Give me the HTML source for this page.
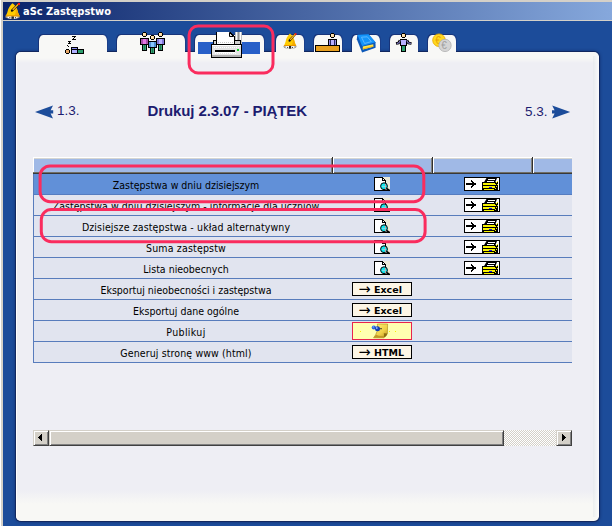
<!DOCTYPE html>
<html lang="pl">
<head>
<meta charset="utf-8">
<title>aSc Zastępstwo</title>
<style>
html,body{margin:0;padding:0;}
body{width:612px;height:526px;overflow:hidden;position:relative;background:#1c4c9a;font-family:"DejaVu Sans Condensed","Liberation Sans",sans-serif;}
.abs{position:absolute;}
#topstrip{left:0;top:0;width:612px;height:2px;background:#d4d0c8;}
#leftw{left:0;top:0;width:1px;height:526px;background:#fff;}
#leftg{left:1px;top:0;width:2px;height:526px;background:#d4d0c8;}
#titlebar{left:3px;top:2px;width:609px;height:18px;background:linear-gradient(to right,#0a246a 0%,#86a8dc 100%);}
#titleline{left:3px;top:20px;width:609px;height:1px;background:#d4d0c8;}
#title{left:23px;top:5px;font-family:"DejaVu Sans Condensed","Liberation Sans",sans-serif;font-weight:bold;font-size:11px;color:#fff;line-height:14px;white-space:nowrap;letter-spacing:0px;}
.tab{position:absolute;top:35px;height:17px;background:#f8f8f6;border-radius:4px 4px 0 0 / 6px 6px 0 0;box-shadow:-1px -1px 0 #17347a, 1px -1px 0 #1a3f8a;}
#panel{left:16px;top:52px;width:583px;height:469px;border-radius:5px;background:linear-gradient(to bottom,#f8f8f6 0px,#f8f8f6 6px,#eeeef4 11px,#eeeef4 438px,#f8f8f5 452px,#f8f8f5 469px);box-shadow:inset 1px 0 0 rgba(255,255,255,0.9),0 0 0 1px #12285f,0 0 3px 1px rgba(8,20,70,0.5);}
.nav{position:absolute;font-family:"Liberation Sans",sans-serif;font-size:13.5px;color:#1c1c70;line-height:16px;white-space:nowrap;}
#heading{left:147.500px;top:102px;letter-spacing:-0.1px;font-family:"Liberation Sans",sans-serif;font-weight:bold;font-size:15px;color:#1c1c70;line-height:18px;white-space:nowrap;}
.row{position:absolute;left:34px;width:538px;height:20px;background:#e1e4ef;border-bottom:1px solid #587cbc;}
.lbl{position:absolute;left:34px;width:304px;text-align:center;font-size:10.5px;line-height:13px;color:#000;white-space:nowrap;}
.hl{position:absolute;border:2.5px solid #f0336c;border-radius:9px;box-sizing:border-box;}
.btn{position:absolute;box-sizing:border-box;border:1px solid #000;background:#fdf6e6;font-family:"DejaVu Sans","Liberation Sans",sans-serif;font-weight:bold;font-size:9.5px;line-height:12px;white-space:nowrap;color:#000;}
.btn .ar{position:absolute;left:5.500px;top:0px;font-family:"DejaVu Sans",sans-serif;font-weight:normal;font-size:14.500px;line-height:12px;}
.btn .tx{position:absolute;left:21px;top:1px;}
.sbb{box-sizing:border-box;background:#d4d0c8;border-top:1px solid #d4d0c8;border-left:1px solid #d4d0c8;border-right:1px solid #404040;border-bottom:1px solid #404040;box-shadow:inset 1px 1px 0 #fff,inset -1px -1px 0 #808080;}
</style>
</head>
<body>
<div id="topstrip" class="abs"></div>
<div id="titlebar" class="abs"></div>
<div id="titleline" class="abs"></div>
<div id="leftw" class="abs"></div>
<div id="leftg" class="abs"></div>
<div id="title" class="abs">aSc Zastępstwo</div>

<div id="panel" class="abs"></div>
<div class="abs" style="left:593px;top:56px;width:6px;height:461px;background:linear-gradient(to right,rgba(225,230,232,0.5),rgba(255,255,255,0.7))"></div>
<!-- tabs -->
<div class="tab" style="left:39px;width:68px"></div>
<div class="tab" style="left:117px;width:68px"></div>
<div class="tab" style="left:195px;width:69px"></div>
<div class="tab" style="left:276px;width:28px"></div>
<div class="tab" style="left:314px;width:28px"></div>
<div class="tab" style="left:352px;width:28px"></div>
<div class="tab" style="left:390px;width:28px"></div>
<div class="tab" style="left:428px;width:28px"></div>
<div class="abs" style="left:198px;top:42px;width:62px;height:12px;background:#2860c8"></div>


<!-- icons -->
<svg class="abs" style="left:0;top:0" width="612" height="526" viewBox="0 0 612 526" shape-rendering="crispEdges">
<!-- title bell -->
<defs><g id="bell" shape-rendering="auto">
<ellipse cx="8" cy="14.300" rx="7.400" ry="1.700" fill="#c8c8c8" stroke="#505050" stroke-width="0.500"/>
<ellipse cx="8" cy="14.700" rx="5" ry="1.400" fill="#ffffff"/>
<rect x="6.800" y="13.400" width="2.600" height="2.800" fill="#282828"/><rect x="4.600" y="14.400" width="1.200" height="1.200" fill="#404040"/><rect x="10.400" y="14.400" width="1.200" height="1.200" fill="#404040"/>
<path d="M8 0.200 C 10.500 2,12.500 4.500,13.200 7.500 C 13.600 10,14.500 11.500,15.400 13.400 L 0.600 13.400 C 2.200 11.500,2.800 9,3.400 6.700 C 4.500 3.500,6.500 1.500,8 0.200 Z" fill="#ffcc00"/>
<path d="M10.800 4.500 C 12.200 6,12.800 7.500,13.200 8.500 C 13.600 10.500,14.500 11.800,15.400 13.400 L 9.500 13.400 C 11.500 11,11.800 8,10.800 4.500 Z" fill="#f4aa00"/>
<path d="M1.400 12.500 L 14.800 12.500 L 15.400 13.400 L 0.600 13.400 Z" fill="#e89400"/>
<path d="M7.400 7.800 L14.300 0.900" stroke="#3a2a00" stroke-width="2.400"/><path d="M8.300 6.900 L14.300 0.900" stroke="#f0a000" stroke-width="1.300"/>
<path d="M7.600 7.600 L14.300 0.900" stroke="#ffe070" stroke-width="0.500"/>
<circle cx="14.600" cy="0.900" r="1.200" fill="#ff1818"/>
<circle cx="7.300" cy="7.900" r="1.100" fill="#101010"/>
</g></defs>
<use href="#bell" transform="translate(4.8,3) scale(0.97,0.98)"/>
<!-- tab1: sleeper -->
<g fill="#000">
<rect x="72" y="36" width="4" height="1"/><rect x="74" y="37" width="1" height="1"/><rect x="73" y="38" width="1" height="1"/><rect x="72" y="39" width="4" height="1"/>
<rect x="68" y="41" width="3" height="1"/><rect x="69" y="42" width="1" height="1"/><rect x="68" y="43" width="3" height="1"/>
<rect x="67" y="45" width="1" height="1"/><rect x="68" y="46" width="1" height="1"/>
<rect x="66" y="49" width="3" height="5"/><rect x="65" y="50" width="5" height="3"/>
<rect x="71" y="47" width="7" height="7"/><rect x="77" y="49" width="7" height="5"/>
</g>
<rect x="66" y="50" width="3" height="3" fill="#e8a868"/>
<rect x="72" y="48" width="5" height="1" fill="#8888f0"/><rect x="72" y="50" width="5" height="3" fill="#b0b0ff"/>
<rect x="78" y="50" width="5" height="3" fill="#2e9e6e"/>
<!-- tab2: three persons -->
<rect x="143" y="32" width="3" height="5" fill="#000"/><rect x="142" y="33" width="5" height="3" fill="#000"/><rect x="143" y="33" width="3" height="3" fill="#f8d498"/><rect x="143" y="33" width="2" height="2" fill="#fde4b8"/><rect x="140" y="38" width="9" height="7" fill="#000"/><rect x="141" y="39" width="7" height="5" fill="#a850a8"/><rect x="143" y="39" width="3" height="5" fill="#e478e4"/><rect x="142" y="44" width="5" height="7" fill="#000"/><rect x="143" y="45" width="3" height="5" fill="#38a878"/><rect x="144" y="45" width="1" height="5" fill="#1e7850"/>
<rect x="159" y="32" width="3" height="5" fill="#000"/><rect x="158" y="33" width="5" height="3" fill="#000"/><rect x="159" y="33" width="3" height="3" fill="#f8d498"/><rect x="159" y="33" width="2" height="2" fill="#fde4b8"/><rect x="156" y="38" width="9" height="7" fill="#000"/><rect x="157" y="39" width="7" height="5" fill="#8078d8"/><rect x="159" y="39" width="3" height="5" fill="#b8b0ff"/><rect x="158" y="44" width="5" height="7" fill="#000"/><rect x="159" y="45" width="3" height="5" fill="#38a878"/><rect x="160" y="45" width="1" height="5" fill="#1e7850"/>
<rect x="151" y="35" width="3" height="5" fill="#000"/><rect x="150" y="36" width="5" height="3" fill="#000"/><rect x="151" y="36" width="3" height="3" fill="#f8d498"/><rect x="151" y="36" width="2" height="2" fill="#fde4b8"/><rect x="148" y="41" width="9" height="7" fill="#000"/><rect x="149" y="42" width="7" height="5" fill="#5090d0"/><rect x="151" y="42" width="3" height="5" fill="#88c8ff"/><rect x="150" y="47" width="5" height="7" fill="#000"/><rect x="151" y="48" width="3" height="5" fill="#38a878"/><rect x="152" y="48" width="1" height="5" fill="#1e7850"/>
<!-- tab3: printer -->
<g>
<rect x="235" y="32" width="7" height="13" fill="#c0c0c0"/><rect x="236" y="32" width="1" height="12" fill="#fff"/><rect x="240" y="32" width="1" height="12" fill="#fff"/><rect x="238" y="32" width="1" height="10" fill="#909090"/>
<rect x="213" y="40" width="28" height="5" fill="#000"/><rect x="214" y="41" width="26" height="4" fill="#d0d0d0"/>
<path d="M216 32 L230 32 L235 37 L235 44 L216 44 Z" fill="#000"/><path d="M217 32 L229.500 32 L234 36.500 L234 44 L217 44 Z" fill="#fff"/>
<path d="M229.500 32.500 L229.500 36.500 L233.500 36.500 Z" fill="#e0e0e0" stroke="#000" stroke-width="1" shape-rendering="auto"/>
<rect x="211" y="44" width="31" height="14" fill="#000"/><rect x="212" y="45" width="29" height="12" fill="#e4e4e4"/><rect x="212" y="45" width="29" height="1" fill="#fff"/>
<rect x="212" y="55" width="29" height="2" fill="#b0b0b0"/>
<rect x="215" y="50" width="20" height="2" fill="#000"/><rect x="215" y="52" width="20" height="1" fill="#fff"/>
<rect x="218" y="42" width="1" height="1" fill="#c8c8c8"/><rect x="220" y="42" width="1" height="1" fill="#c8c8c8"/><rect x="222" y="42" width="1" height="1" fill="#c8c8c8"/><rect x="224" y="42" width="1" height="1" fill="#c8c8c8"/><rect x="226" y="42" width="1" height="1" fill="#c8c8c8"/><rect x="228" y="42" width="1" height="1" fill="#c8c8c8"/><rect x="230" y="42" width="1" height="1" fill="#c8c8c8"/><rect x="232" y="42" width="1" height="1" fill="#c8c8c8"/><rect x="214" y="47" width="1" height="1" fill="#ffffff"/><rect x="216" y="47" width="1" height="1" fill="#ffffff"/><rect x="218" y="47" width="1" height="1" fill="#ffffff"/><rect x="220" y="47" width="1" height="1" fill="#ffffff"/><rect x="222" y="47" width="1" height="1" fill="#ffffff"/><rect x="224" y="47" width="1" height="1" fill="#ffffff"/><rect x="226" y="47" width="1" height="1" fill="#ffffff"/><rect x="228" y="47" width="1" height="1" fill="#ffffff"/><rect x="230" y="47" width="1" height="1" fill="#ffffff"/><rect x="232" y="47" width="1" height="1" fill="#ffffff"/><rect x="234" y="47" width="1" height="1" fill="#ffffff"/><rect x="236" y="47" width="1" height="1" fill="#ffffff"/><rect x="238" y="47" width="1" height="1" fill="#ffffff"/><rect x="215" y="53" width="1" height="1" fill="#ffffff"/><rect x="217" y="53" width="1" height="1" fill="#ffffff"/><rect x="219" y="53" width="1" height="1" fill="#ffffff"/><rect x="221" y="53" width="1" height="1" fill="#ffffff"/><rect x="223" y="53" width="1" height="1" fill="#ffffff"/><rect x="225" y="53" width="1" height="1" fill="#ffffff"/><rect x="227" y="53" width="1" height="1" fill="#ffffff"/><rect x="229" y="53" width="1" height="1" fill="#ffffff"/><rect x="231" y="53" width="1" height="1" fill="#ffffff"/><rect x="233" y="53" width="1" height="1" fill="#ffffff"/><rect x="235" y="53" width="1" height="1" fill="#ffffff"/><rect x="237" y="49" width="2" height="2" fill="#10d020"/>
</g>
<!-- tab4: bell -->
<use href="#bell" transform="translate(283.2,33.2) scale(0.85,0.95)"/>
<!-- tab5: desk person -->
<g>
<rect x="331" y="33" width="3" height="5" fill="#000"/><rect x="330" y="34" width="5" height="3" fill="#000"/><rect x="331" y="34" width="3" height="3" fill="#f8d498"/><rect x="331" y="34" width="2" height="2" fill="#fde4b8"/>
<rect x="328" y="39" width="9" height="7" fill="#000"/><rect x="329" y="40" width="7" height="5" fill="#9088e8"/><rect x="330" y="40" width="1" height="5" fill="#2a2860"/><rect x="334" y="40" width="1" height="5" fill="#2a2860"/><rect x="331" y="40" width="3" height="5" fill="#b8b0ff"/>
<rect x="315" y="45" width="25" height="7" fill="#000"/><rect x="316" y="46" width="23" height="5" fill="#e8a020"/>
</g>
<!-- tab6: book -->
<g shape-rendering="auto">
<path d="M357.400 34.800 L368.600 34.200 L375.500 42.200 L375.600 47.800 L362.100 52.600 L356.800 39.200 Z" fill="#0c58b8"/>
<path d="M357.400 34.800 L368.600 34.200 L375.400 42.200 L362.100 46 Z" fill="#1494fa"/>
<path d="M362.800 46.600 L373.300 44.200 L373.300 46.800 L362.800 49.600 Z" fill="#ffe84a"/>
<path d="M362.800 48.300 L373.300 45.800 L373.300 46.800 L362.800 49.600 Z" fill="#f0b820"/>
<path d="M361.500 37.200 L367.300 36.800 L371.300 41.600 L364.600 43.500 Z" fill="none" stroke="#6cc0ff" stroke-width="0.800"/>
</g>
<!-- tab7: person arms spread -->
<g>
<rect x="402" y="33" width="3" height="5" fill="#000"/><rect x="401" y="34" width="5" height="3" fill="#000"/><rect x="402" y="34" width="3" height="3" fill="#f8d498"/><rect x="402" y="34" width="2" height="2" fill="#fde4b8"/>
<rect x="400" y="39" width="7" height="7" fill="#000"/><rect x="401" y="40" width="5" height="5" fill="#b8b0ff"/>
<path d="M400 40.5 L398.5 43 L396 43.5 M407 40.5 L408.5 43 L411.5 43.5" stroke="#000" stroke-width="2.6" fill="none" shape-rendering="auto"/>
<path d="M400.3 40.5 L398.8 43 L396.8 43.4 M406.7 40.5 L408.2 43 L410.8 43.4" stroke="#9890f0" stroke-width="1" fill="none" shape-rendering="auto"/>
<rect x="401" y="45" width="5" height="7" fill="#000"/><rect x="402" y="46" width="3" height="5" fill="#2e9e6e"/>
</g>
<!-- tab8: coins -->
<g shape-rendering="auto">
<circle cx="439" cy="40.2" r="6.3" fill="#ffd820" stroke="#e8a800" stroke-width="0.8"/>
<text x="435.2" y="44" font-family="Liberation Sans, sans-serif" font-size="10" fill="#e8a000">€</text>
<circle cx="445" cy="45.4" r="6.2" fill="#d4d4d4" stroke="#b0b0b0" stroke-width="0.8"/>
<text x="441.2" y="49.2" font-family="Liberation Sans, sans-serif" font-size="10" fill="#a0a0a0">€</text>
</g>
</svg>

<!-- nav -->
<svg class="abs" style="left:0;top:0" width="612" height="526" viewBox="0 0 612 526" fill="#1c4c9a">
<path d="M35 111.900 L53 105.400 L50.600 110.200 L53.200 110.200 L53.200 113.500 L50.600 113.500 L53 118.500 Z"/>
<path d="M570.200 111.900 L552.200 105.400 L554.600 110.200 L552 110.200 L552 113.500 L554.600 113.500 L552.200 118.500 Z"/>
</svg>
<div class="nav" style="left:57px;top:103px">1.3.</div>
<div id="heading" class="abs">Drukuj 2.3.07 - PIĄTEK</div>
<div class="nav" style="left:525px;top:104px">5.3.</div>

<!-- table -->
<div class="abs" style="left:33px;top:157px;width:539px;height:17px;background:#a0b9e6"></div>
<div class="abs" style="left:33px;top:157px;width:539px;height:1px;background:#fff"></div>
<div class="abs" style="left:34px;top:158px;width:538px;height:1px;background:#d6d6d2"></div>
<div class="abs" style="left:33px;top:157px;width:1px;height:16px;background:#fff"></div>
<div class="abs" style="left:33px;top:172px;width:539px;height:1px;background:#716f66"></div>
<div class="abs" style="left:33px;top:173px;width:539px;height:1px;background:#383838"></div>
<div class="abs" style="left:331px;top:158px;width:1px;height:15px;background:#80807c"></div><div class="abs" style="left:332px;top:157px;width:1px;height:17px;background:#303030"></div><div class="abs" style="left:333px;top:157px;width:1px;height:16px;background:#fff"></div>
<div class="abs" style="left:431px;top:158px;width:1px;height:15px;background:#80807c"></div><div class="abs" style="left:432px;top:157px;width:1px;height:17px;background:#303030"></div><div class="abs" style="left:433px;top:157px;width:1px;height:16px;background:#fff"></div>
<div class="abs" style="left:531px;top:158px;width:1px;height:15px;background:#80807c"></div><div class="abs" style="left:532px;top:157px;width:1px;height:17px;background:#303030"></div><div class="abs" style="left:533px;top:157px;width:1px;height:16px;background:#fff"></div>

<div class="row" style="top:174px;height:20px;background:#6190d8;border-bottom-color:#557cc0"></div>
<div class="row" style="top:195px"></div>
<div class="row" style="top:216px"></div>
<div class="row" style="top:237px"></div>
<div class="row" style="top:258px"></div>
<div class="row" style="top:279px"></div>
<div class="row" style="top:300px"></div>
<div class="row" style="top:321px"></div>
<div class="row" style="top:342px"></div>
<div class="abs" style="left:33px;top:174px;width:1px;height:189px;background:#587cbc"></div>

<div class="lbl" style="top:179px">Zastępstwa w dniu dzisiejszym</div>
<div class="lbl" style="top:200px;letter-spacing:0.04px">Zastępstwa w dniu dzisiejszym - informacje dla uczniów</div>
<div class="lbl" style="top:221px;letter-spacing:0.12px">Dzisiejsze zastępstwa - układ alternatywny</div>
<div class="lbl" style="top:242px;letter-spacing:0.17px">Suma zastępstw</div>
<div class="lbl" style="top:263px">Lista nieobecnych</div>
<div class="lbl" style="top:284px">Eksportuj nieobecności i zastępstwa</div>
<div class="lbl" style="top:305px">Eksportuj dane ogólne</div>
<div class="lbl" style="top:326px;letter-spacing:0.35px">Publikuj</div>
<div class="lbl" style="top:347px;letter-spacing:0.12px">Generuj stronę www (html)</div>

<!-- buttons -->
<div class="btn" style="left:352px;top:282px;width:60px;height:14px;"><span class="ar">→</span><span class="tx">Excel</span></div>
<div class="btn" style="left:352px;top:303px;width:60px;height:14px;"><span class="ar">→</span><span class="tx">Excel</span></div>
<div class="btn" style="left:352px;top:322px;width:60px;height:18px;background:#ffffb0;border-color:#e8244e"></div>
<div class="btn" style="left:352px;top:345px;width:60px;height:14px;"><span class="ar">→</span><span class="tx">HTML</span></div>

<!-- table icons -->
<svg class="abs" style="left:0;top:0" width="612" height="526" viewBox="0 0 612 526" shape-rendering="crispEdges">
<defs>
<g id="prev">
<rect x="8" y="0" width="8" height="13" fill="#ece9d8"/>
<rect x="0" y="0" width="9" height="14" fill="#000"/><rect x="1" y="1" width="8" height="12" fill="#fff"/>
<rect x="9" y="1" width="1" height="1" fill="#000"/><rect x="10" y="2" width="1" height="1" fill="#000"/><rect x="11" y="3" width="1" height="3" fill="#000"/><rect x="9" y="2" width="1" height="2" fill="#fff"/><rect x="8" y="3" width="3" height="1" fill="#000"/><rect x="8" y="1" width="1" height="2" fill="#000"/><rect x="9" y="4" width="2" height="2" fill="#fff"/>
<rect x="8" y="13" width="8" height="1" fill="#000"/>
<path d="M12.5 11.5 L15.5 13.5" stroke="#000" stroke-width="1.6" shape-rendering="auto"/>
<circle cx="10" cy="9.2" r="3.4" fill="#10e8f0" stroke="#000" stroke-width="1" shape-rendering="auto"/>
<rect x="11" y="7" width="1" height="5" fill="#c0a0a0"/><rect x="8" y="9" width="4" height="1" fill="#80d8e0"/>
</g>
<g id="prn">
<rect x="0" y="0" width="36" height="14" fill="#000"/><rect x="1" y="1" width="34" height="12" fill="#fff"/>
<rect x="2" y="6" width="9" height="2" fill="#000"/><rect x="8" y="4" width="1" height="6" fill="#000"/><rect x="9" y="5" width="1" height="4" fill="#000"/><rect x="7" y="3" width="1" height="2" fill="#000"/><rect x="7" y="9" width="1" height="2" fill="#000"/><rect x="10" y="6" width="2" height="2" fill="#000"/>
<path d="M22.500 1 L33 1 L31 6 L19.500 6 Z" fill="#000" shape-rendering="auto"/>
<rect x="24" y="2" width="7" height="1" fill="#fff"/><rect x="23" y="4" width="7" height="1" fill="#fff"/>
<rect x="18" y="5" width="16" height="8" fill="#000"/>
<rect x="19" y="6" width="12" height="2" fill="#f8f400"/><rect x="19" y="9" width="12" height="2" fill="#f8f400"/><rect x="20" y="12" width="10" height="1" fill="#f8f400"/>
<rect x="25" y="10" width="3" height="1" fill="#1818e8"/>
<rect x="32" y="5" width="1" height="1" fill="#f8f400"/><rect x="31" y="7" width="1" height="1" fill="#f8f400"/><rect x="33" y="7" width="1" height="1" fill="#f8f400"/><rect x="32" y="9" width="1" height="1" fill="#f8f400"/><rect x="31" y="11" width="1" height="1" fill="#f8f400"/><rect x="33" y="4" width="1" height="1" fill="#f8f400"/>
<rect x="34" y="1" width="1" height="3" fill="#fff"/>
</g>
</defs>
<use href="#prev" x="374" y="177"/><use href="#prn" x="464" y="177"/>
<use href="#prev" x="374" y="198"/><use href="#prn" x="464" y="198"/>
<use href="#prev" x="374" y="219"/><use href="#prn" x="464" y="219"/>
<use href="#prev" x="374" y="240"/><use href="#prn" x="464" y="240"/>
<use href="#prev" x="374" y="261"/><use href="#prn" x="464" y="261"/>
<g shape-rendering="auto">
<defs><linearGradient id="ng" x1="0" y1="0" x2="1" y2="1"><stop offset="0" stop-color="#fff27a"/><stop offset="0.600" stop-color="#f0d048"/><stop offset="1" stop-color="#b89020"/></linearGradient></defs>
<path d="M377.400 324 L387.600 324 L387.400 333.500 Q386.500 336.500 383.500 337.800 L373.600 337.800 Q378.500 332 377.400 324 Z" fill="url(#ng)" stroke="#a88818" stroke-width="0.600"/>
<path d="M387.400 333.500 Q386.500 336.500 383.500 337.800 Q384.500 335 383.800 333.200 Z" fill="#8c6c10"/>
<path d="M373.600 337.800 L383.500 337.800 L384 336 Q379.500 336.400 376 334.800 Z" fill="#c09828"/>
<circle cx="373.800" cy="327.500" r="2.100" fill="#2a62e6"/><circle cx="377.500" cy="328.800" r="2.500" fill="#143cb4"/><circle cx="376.800" cy="328" r="0.900" fill="#8cb8ff"/><circle cx="373.300" cy="326.900" r="0.700" fill="#8cb8ff"/>
<rect x="379.500" y="328.300" width="2.500" height="0.900" fill="#303030"/>
</g>
<rect x="360" y="331" width="1" height="1" fill="#f8f000"/><rect x="389" y="331" width="1" height="1" fill="#f8f000"/><rect x="395" y="331" width="1" height="1" fill="#f8f000"/>
</svg>
<!-- highlights -->
<svg class="abs" style="left:0;top:0" width="612" height="526" viewBox="0 0 612 526" fill="none" stroke="#fa2c5e" stroke-width="3">
<rect x="189.1" y="26.1" width="83.9" height="46.8" rx="9" ry="9"/>
<rect x="40.1" y="166" width="383.7" height="35.7" rx="10" ry="10"/>
<rect x="41.3" y="209.6" width="383.8" height="32.1" rx="10" ry="10"/>
</svg>

<!-- scrollbar -->
<div class="abs" style="left:33px;top:430px;width:539px;height:16px;background:#d4d0c8 repeating-conic-gradient(#ffffff 0% 25%, #d4d0c8 0% 50%) 0 0/2px 2px"></div>
<div class="abs sbb" style="left:33px;top:430px;width:16px;height:16px"></div>
<div class="abs sbb" style="left:49px;top:430px;width:455px;height:16px"></div>
<div class="abs sbb" style="left:556px;top:430px;width:16px;height:16px"></div>
<svg class="abs" style="left:33px;top:430px" width="539" height="16" viewBox="0 0 539 16" shape-rendering="crispEdges">
<path d="M5 7.500 L9 3.500 L9 11.500 Z" fill="#000"/>
<path d="M533 7.500 L529 3.500 L529 11.500 Z" fill="#000"/>
</svg>
</body>
</html>
